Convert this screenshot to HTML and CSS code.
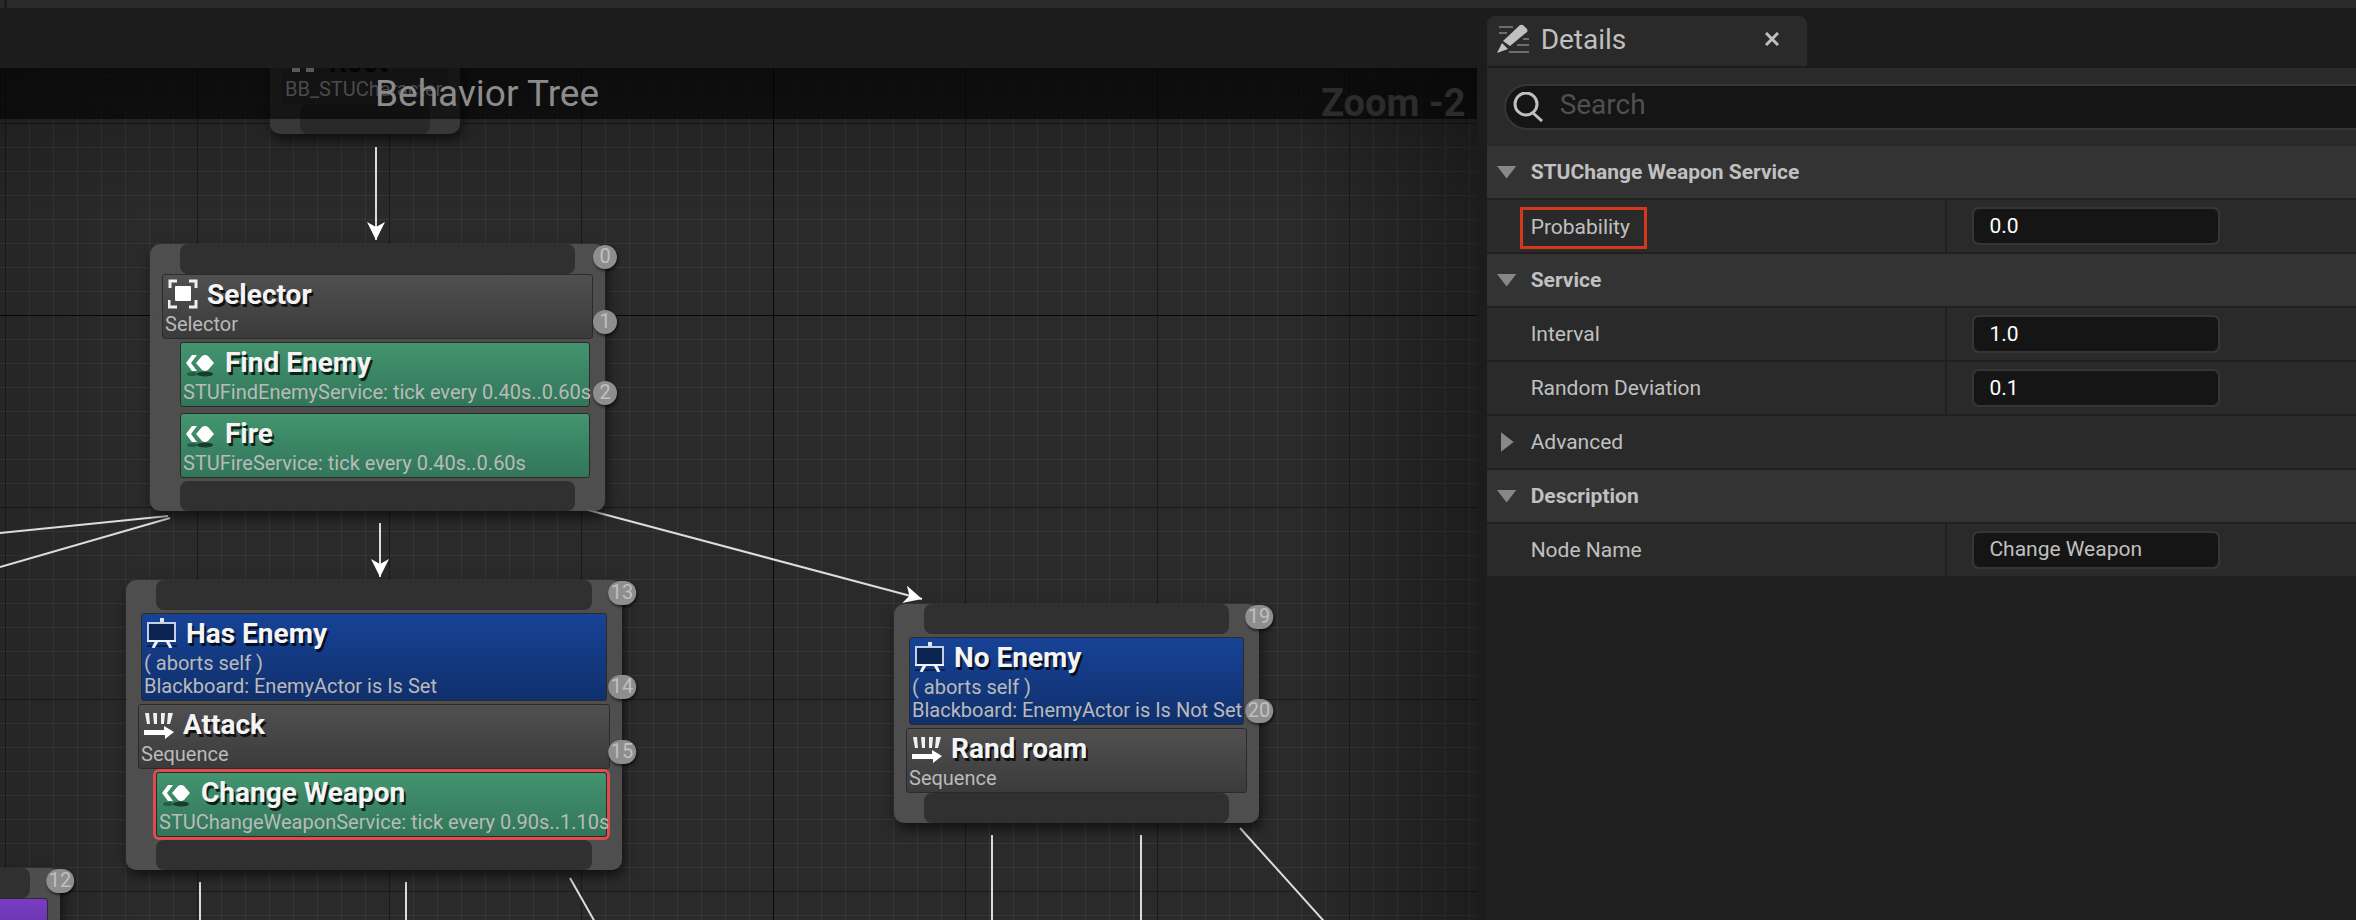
FILE: index.html
```html
<!DOCTYPE html>
<html lang="en">

<head>
    <meta charset="UTF-8">
    <meta name="viewport" content="width=device-width, initial-scale=1.0">
    <title>Behavior Tree</title>
    <link rel="stylesheet" href="styles.css">
</head>

<body>
    <!-- shared icons -->
    <svg class="icon-defs" aria-hidden="true">
        <symbol id="icon-selector" viewBox="0 0 30 30">
            <path d="M2 9V2h7M21 2h7v7M28 21v7h-7M9 28H1v-7" fill="none" stroke="#f0f0f0" stroke-width="3" />
            <rect x="7" y="7" width="16" height="15" rx="1" fill="#fff" />
        </symbol>
        <symbol id="icon-service" viewBox="0 0 30 30">
            <ellipse cx="19" cy="27" rx="8" ry="2.500" fill="#173c2c" />
            <ellipse cx="6" cy="27" rx="5" ry="2" fill="#245b43" />
            <path d="M0 16L6 8h5L5 16l6 8H6z" fill="#fff" />
            <path d="M10 16l6-7q3-2 6 0l6 7-6 7q-3 2-6 0z" fill="#fff" />
        </symbol>
        <symbol id="icon-decorator" viewBox="0 0 30 30">
            <path d="M0 27h30v2H0z" fill="#0b2250" />
            <path d="M15 0v4" stroke="#dfe6f2" stroke-width="4" />
            <path d="M10 23L6 30M20 23l4 7" stroke="#eef2f8" stroke-width="3" />
            <rect x="1" y="5" width="27" height="18" fill="#0a2350" stroke="#c3cfe6" stroke-width="2" />
            <path d="M0 23h29" stroke="#eef2f8" stroke-width="2" />
        </symbol>
        <symbol id="icon-sequence" viewBox="0 0 30 30">
            <path d="M1 4h4l1 11H3zM9 4h4v11h-3zM17 4h4l-1 11h-3zM24 4h5l-3 11h-3z" fill="#f0f0f0" />
            <path d="M0 21h20v-4l10 6-9 7v-4H0z" fill="#fff" />
        </symbol>
    </svg>

    <div class="top-bar"></div>

    <div class="editor">
        <main class="graph">
            <svg class="edges" aria-hidden="true">
                <defs>
                    <marker id="arrow" viewBox="0 0 18 18" refX="18" refY="9" markerWidth="18" markerHeight="18"
                        markerUnits="userSpaceOnUse" orient="auto">
                        <path d="M0 0L18 9L0 18L5 9z" fill="#fff" />
                    </marker>
                </defs>
                <path d="M376 79V172" marker-end="url(#arrow)" />
                <path d="M380 455V509" marker-end="url(#arrow)" />
                <path d="M588 442L922 531" marker-end="url(#arrow)" />
                <path d="M168 448L0 465M170 450L0 499" />
                <path d="M200 814V900M406 814V900M570 810L604 870" />
                <path d="M992 767V900M1141 767V900M1240 760L1340 871" />
            </svg>

            <section class="node node-root">
                <div class="block composite">
                    <div class="title">
                        <svg class="icon" viewBox="0 0 30 30"><path d="M15 4v12M4 28v-6l5-6h12l5 6v6h-8v-5h-6v5z" fill="#ddd" /></svg>
                        Root
                    </div>
                    <p>BB_STUCharacter</p>
                </div>
                <div class="pin"></div>
            </section>

            <section class="node node-selector">
                <div class="pin"></div>
                <span class="badge">0</span>
                <div class="block composite">
                    <div class="title"><svg class="icon"><use href="#icon-selector" /></svg>Selector</div>
                    <p>Selector</p>
                    <span class="badge">1</span>
                </div>
                <div class="block service">
                    <div class="title"><svg class="icon"><use href="#icon-service" /></svg>Find Enemy</div>
                    <p>STUFindEnemyService: tick every 0.40s..0.60s</p>
                    <span class="badge">2</span>
                </div>
                <div class="block service">
                    <div class="title"><svg class="icon"><use href="#icon-service" /></svg>Fire</div>
                    <p>STUFireService: tick every 0.40s..0.60s</p>
                </div>
                <div class="pin"></div>
            </section>

            <section class="node node-attack">
                <div class="pin"></div>
                <span class="badge">13</span>
                <div class="block decorator">
                    <div class="title"><svg class="icon"><use href="#icon-decorator" /></svg>Has Enemy</div>
                    <p>( aborts self )</p>
                    <p>Blackboard: EnemyActor is Is Set</p>
                    <span class="badge">14</span>
                </div>
                <div class="block composite">
                    <div class="title"><svg class="icon"><use href="#icon-sequence" /></svg>Attack</div>
                    <p>Sequence</p>
                    <span class="badge">15</span>
                </div>
                <div class="block service selected">
                    <div class="title"><svg class="icon"><use href="#icon-service" /></svg>Change Weapon</div>
                    <p>STUChangeWeaponService: tick every 0.90s..1.10s</p>
                </div>
                <div class="pin"></div>
            </section>

            <section class="node node-roam">
                <div class="pin"></div>
                <span class="badge">19</span>
                <div class="block decorator">
                    <div class="title"><svg class="icon"><use href="#icon-decorator" /></svg>No Enemy</div>
                    <p>( aborts self )</p>
                    <p>Blackboard: EnemyActor is Is Not Set</p>
                    <span class="badge">20</span>
                </div>
                <div class="block composite">
                    <div class="title"><svg class="icon"><use href="#icon-sequence" /></svg>Rand roam</div>
                    <p>Sequence</p>
                </div>
                <div class="pin"></div>
            </section>

            <section class="node node-task">
                <div class="pin"></div>
                <span class="badge">12</span>
                <div class="block task"></div>
            </section>

            <div class="graph-title">Behavior Tree</div>
            <div class="graph-zoom">Zoom -2</div>
        </main>

        <aside class="details">
            <div class="tab">
                <svg class="tab-icon" viewBox="0 0 32 30">
                    <path d="M2 3h14M2 9h8M26 15h6M20 21h12M12 28h20" stroke="#6e6e6e" stroke-width="2" />
                    <path d="M6 17L23 1q2-1 4 1l3 3q1 2 0 3L13 22z" fill="#c0c0c0" />
                    <path d="M5 19l6 6L0 29z" fill="#c0c0c0" />
                </svg>
                <span>Details</span>
                <button class="close" aria-label="Close">
                    <svg viewBox="0 0 14 14"><path d="M1 1l12 12M13 1L1 13" stroke="#c0c0c0" stroke-width="3" /></svg>
                </button>
            </div>

            <div class="panel">
                <div class="search">
                    <svg viewBox="0 0 30 30"><circle cx="13" cy="12" r="11" /><path d="M20 21l9 8" /></svg>
                    <input type="text" placeholder="Search" aria-label="Search">
                </div>

                <div class="group"><span class="arrow"></span>STUChange Weapon Service</div>
                <div class="row">
                    <label for="probability"><span class="marked">Probability</span></label>
                    <div class="value"><input type="text" id="probability" value="0.0"></div>
                </div>

                <div class="group"><span class="arrow"></span>Service</div>
                <div class="row">
                    <label for="interval">Interval</label>
                    <div class="value"><input type="text" id="interval" value="1.0"></div>
                </div>
                <div class="row">
                    <label for="deviation">Random Deviation</label>
                    <div class="value"><input type="text" id="deviation" value="0.1"></div>
                </div>
                <div class="group advanced"><span class="arrow closed"></span>Advanced</div>

                <div class="group"><span class="arrow"></span>Description</div>
                <div class="row">
                    <label for="nodename">Node Name</label>
                    <div class="value"><input type="text" id="nodename" class="name" value="Change Weapon"></div>
                </div>
            </div>
        </aside>
    </div>
</body>

</html>
```
FILE: styles.css
```css
* {
    box-sizing: border-box;
}

body {
    margin: 0;
    height: 100vh;
    display: flex;
    flex-direction: column;
    overflow: hidden;
    background-color: #1c1c1c;
    color: #c0c0c0;
    font-family: Roboto, "Liberation Sans", sans-serif;
    font-size: 21px;
}

.icon-defs {
    position: absolute;
    width: 0;
    height: 0;
}

.top-bar {
    flex: none;
    height: 8px;
    background-color: #2a2a2a;
    border-left: 4px solid #2a2a2a;
    box-shadow: inset 3px 0 0 #1c1c1c;
}

.editor {
    flex: 1;
    min-height: 0;
    display: flex;
    gap: 10px;
}

/* graph canvas */
.graph {
    position: relative;
    flex: 1;
    margin-top: 60px;
    overflow: hidden;
    background-color: #2a2a2a;
    background-image:
        linear-gradient(to right, transparent calc(100% - 190px), rgba(0, 0, 0, 0.3)),
        linear-gradient(to right, rgba(0, 0, 0, 0.1), transparent 150px),
        linear-gradient(to bottom, rgba(0, 0, 0, 0.25), transparent 150px),
        linear-gradient(#060606 1px, transparent 1px),
        linear-gradient(to right, #060606 1px, transparent 1px),
        linear-gradient(#1a1a1a 1px, transparent 1px),
        linear-gradient(to right, #1a1a1a 1px, transparent 1px),
        linear-gradient(#363636 1px, transparent 1px),
        linear-gradient(to right, #363636 1px, transparent 1px);
    background-size: auto, auto, auto, 1536px 1536px, 1536px 1536px, 192px 192px, 192px 192px, 24px 24px, 24px 24px;
    background-position: 0 0, 0 0, 0 0, 773px 247px, 773px 247px, 5px 55px, 5px 55px, 5px 7px, 5px 7px;
}

.edges {
    position: absolute;
    width: 100%;
    height: 100%;
    fill: none;
    stroke: #dcdcdc;
    stroke-width: 2px;
}

.edges marker {
    stroke: none;
}

.graph-title {
    position: absolute;
    top: 0;
    left: 0;
    right: 0;
    height: 51px;
    padding-left: 375px;
    background-color: rgba(0, 0, 0, 0.6);
    color: #8c8c8c;
    font-size: 37px;
    line-height: 51px;
}

.graph-zoom {
    position: absolute;
    top: 10px;
    right: 11px;
    color: #2c2c2c;
    font-size: 38px;
    font-weight: bold;
    line-height: 50px;
}

/* tree nodes */
.node {
    position: absolute;
    display: flex;
    flex-direction: column;
    background-color: rgba(82, 82, 82, 0.9);
    border-radius: 10px;
    box-shadow: 2px 6px 12px rgba(0, 0, 0, 0.6);
}

.node-root {
    top: -29px;
    left: 270px;
    width: 190px;
    background-color: #383838;
}

.node-selector {
    top: 176px;
    left: 150px;
    width: 455px;
}

.node-attack {
    top: 512px;
    left: 126px;
    width: 496px;
}

.node-roam {
    top: 536px;
    left: 894px;
    width: 365px;
}

.node-task {
    top: 800px;
    left: -240px;
    width: 300px;
}

.pin {
    height: 30px;
    margin: 0 30px;
    background-color: #303030;
    border-radius: 8px;
}

.node-root .pin {
    background-color: #292929;
}

.block {
    position: relative;
    padding-bottom: 2px;
    border: 1px solid #2b2b2b;
    border-radius: 3px;
}

.block p {
    margin: 0;
    padding-left: 2px;
    color: #bababa;
    font-size: 20px;
    line-height: 23px;
    white-space: nowrap;
}

.composite {
    margin: 0 12px;
    background-image: linear-gradient(#505050, #3b3b3b);
}

.node-root .composite {
    background-image: none;
    background-color: #303030;
    border-color: #303030;
}

.decorator {
    margin: 3px 15px;
    background-image: linear-gradient(#174296, #10306c);
}

.service {
    margin: 3px 15px 3px 30px;
    background-image: linear-gradient(#43946f, #32765a);
}

.task {
    height: 65px;
    margin: 0 12px;
    background-image: linear-gradient(#783cc4, #5a2c94);
}

.selected {
    box-shadow: 0 0 0 3px #e04c4e;
}

.title {
    display: flex;
    align-items: center;
    gap: 9px;
    height: 38px;
    padding-left: 5px;
    color: #f4f4f4;
    font-size: 28px;
    font-weight: bold;
    text-shadow: 2px 3px 0 rgba(0, 0, 0, 0.75);
    white-space: nowrap;
}

.node-root .title {
    color: #111;
}

.icon {
    flex: none;
    width: 30px;
    height: 30px;
}

.badge {
    position: absolute;
    top: 1px;
    right: 0;
    min-width: 24px;
    height: 24px;
    padding: 0 3px;
    transform: translateX(50%);
    background-color: #8e8e8e;
    border-radius: 12px;
    box-shadow: 1px 2px 3px rgba(0, 0, 0, 0.6);
    color: #c0c0c0;
    font-size: 20px;
    line-height: 22px;
    text-align: center;
}

.composite .badge {
    top: auto;
    bottom: 4px;
    right: -13px;
}

.decorator .badge,
.service .badge {
    top: auto;
    bottom: 1px;
    right: -16px;
}

/* details panel */
.details {
    flex: none;
    width: 36.9%;
    min-width: 600px;
    margin-top: 8px;
    display: flex;
    flex-direction: column;
    overflow: hidden;
}

.tab {
    display: flex;
    align-items: center;
    width: 320px;
    height: 50px;
    margin-bottom: 2px;
    padding: 0 28px 4px 10px;
    background-color: #2a2a2a;
    border-radius: 8px 8px 0 0;
    font-size: 28px;
}

.tab-icon {
    width: 32px;
    height: 30px;
    margin-right: 12px;
}

.close {
    margin-left: auto;
    padding: 0;
    width: 14px;
    height: 14px;
    border: none;
    background: none;
}

.close svg {
    display: block;
}

.panel {
    flex: 1;
    background-color: #202020;
}

.search {
    display: flex;
    align-items: center;
    height: 78px;
    padding: 0 0 0 17px;
    background-color: #2a2a2a;
    position: relative;
}

.search svg {
    position: absolute;
    left: 26px;
    width: 30px;
    height: 30px;
    fill: none;
    stroke: #c0c0c0;
    stroke-width: 3px;
}

.search input {
    flex: 1;
    height: 46px;
    margin-right: -30px;
    padding: 0 0 6px 54px;
    background-color: #151515;
    border: 2px solid #363636;
    border-radius: 23px;
    color: #c0c0c0;
    font-family: inherit;
    font-size: 28px;
}

.search input::placeholder {
    color: #505050;
}

.group {
    display: flex;
    align-items: center;
    height: 52px;
    margin-bottom: 2px;
    padding-left: 10px;
    background-color: #333333;
    font-weight: bold;
}

.advanced {
    background-color: #2a2a2a;
    font-weight: normal;
}

.arrow {
    width: 20px;
    height: 13px;
    margin-right: 14px;
    background-color: #888888;
    clip-path: polygon(0 0, 100% 0, 50% 100%);
}

.arrow.closed {
    width: 13px;
    height: 20px;
    margin: 0 17px 0 4px;
    clip-path: polygon(0 0, 100% 50%, 0 100%);
}

.row {
    display: flex;
    height: 52px;
    margin-bottom: 2px;
    background-color: #2a2a2a;
}

.row label {
    display: flex;
    align-items: center;
    width: 53%;
    padding-left: 44px;
    border-right: 2px solid #202020;
}

.marked {
    margin-left: -11px;
    margin-top: 4px;
    padding: 5px 14px 7px 8px;
    border: 3px solid #d5391d;
}

.value {
    flex: 1;
    display: flex;
    align-items: center;
    padding-left: 25px;
}

.value input {
    width: 248px;
    height: 38px;
    padding: 0 15px;
    background-color: #151515;
    border: 2px solid #363636;
    border-radius: 7px;
    color: #fff;
    font-family: inherit;
    font-size: 21px;
}

.value .name {
    padding-bottom: 3px;
    color: #c0c0c0;
}
```
